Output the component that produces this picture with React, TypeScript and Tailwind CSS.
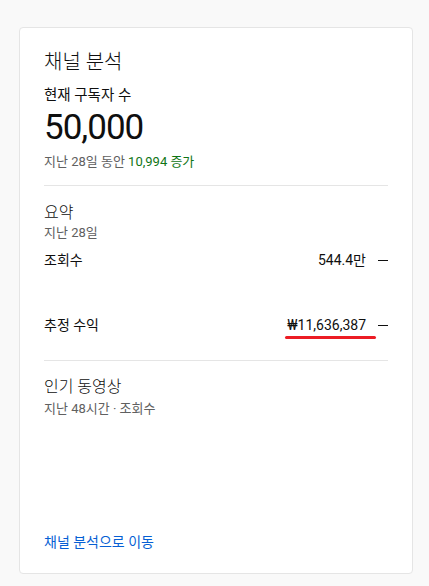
const font = { fontFamily: 'Roboto, "Noto Sans CJK KR", sans-serif' }

function MetricRow({ label, value, mark }: { label: string; value: string; mark?: boolean }) {
  return (
    <div className="flex items-center justify-between text-[14px] leading-5 text-[#0f0f0f]">
      <span>{label}</span>
      <div className="flex items-center">
        <span className="relative">
          {value}
          {mark && (
            <span className="absolute left-[-2px] right-[-10px] top-[21px] h-[3px] rounded-full bg-[#ec1c24]" />
          )}
        </span>
        <span className="ml-3 w-[10px] h-px bg-[#0f0f0f]" />
      </div>
    </div>
  )
}

export default function App() {
  return (
    <div className="min-h-[586px] bg-[#f9f9f9] pt-[27px] pl-[19px] pr-[16px]" style={font}>
      <div className="bg-white border border-[#e5e5e5] rounded-[4px] px-6 pt-[20px] pb-[19px] h-[547px] flex flex-col">
        {/* Header */}
        <h2 className="text-[20px] leading-7 text-[#0f0f0f] font-light">채널 분석</h2>
        <p className="mt-[10px] text-[14.5px] leading-5 text-[#0f0f0f]">현재 구독자 수</p>
        <p className="text-[35px] leading-[44px] tracking-[-1px] text-[#0f0f0f]">50,000</p>
        <p className="mt-[3px] text-[13px] leading-[18px] text-[#606060]">
          지난 28일 동안 <span className="text-[#107516]">10,994 증가</span>
        </p>

        <div className="mt-[14px] border-t border-[#e5e5e5]" />

        {/* Summary */}
        <div className="pt-[16px]">
          <h3 className="text-[16px] leading-[22px] text-[#0f0f0f] font-light">요약</h3>
          <p className="text-[13px] leading-[18px] text-[#606060]">지난 28일</p>
          <div className="mt-[8px]">
            <MetricRow label="조회수" value="544.4만" />
          </div>
          <div className="mt-[45px]">
            <MetricRow label="추정 수익" value="₩11,636,387" mark />
          </div>
        </div>

        <div className="mt-[25px] border-t border-[#e5e5e5]" />

        {/* Top videos */}
        <div className="pt-[15px]">
          <h3 className="text-[16px] leading-[22px] text-[#0f0f0f] font-light">인기 동영상</h3>
          <p className="mt-[2px] text-[13px] leading-[18px] text-[#606060]">지난 48시간 · 조회수</p>
        </div>

        <div className="mt-auto">
          <a className="text-[14px] leading-5 text-[#065fd4]">채널 분석으로 이동</a>
        </div>
      </div>
    </div>
  )
}
